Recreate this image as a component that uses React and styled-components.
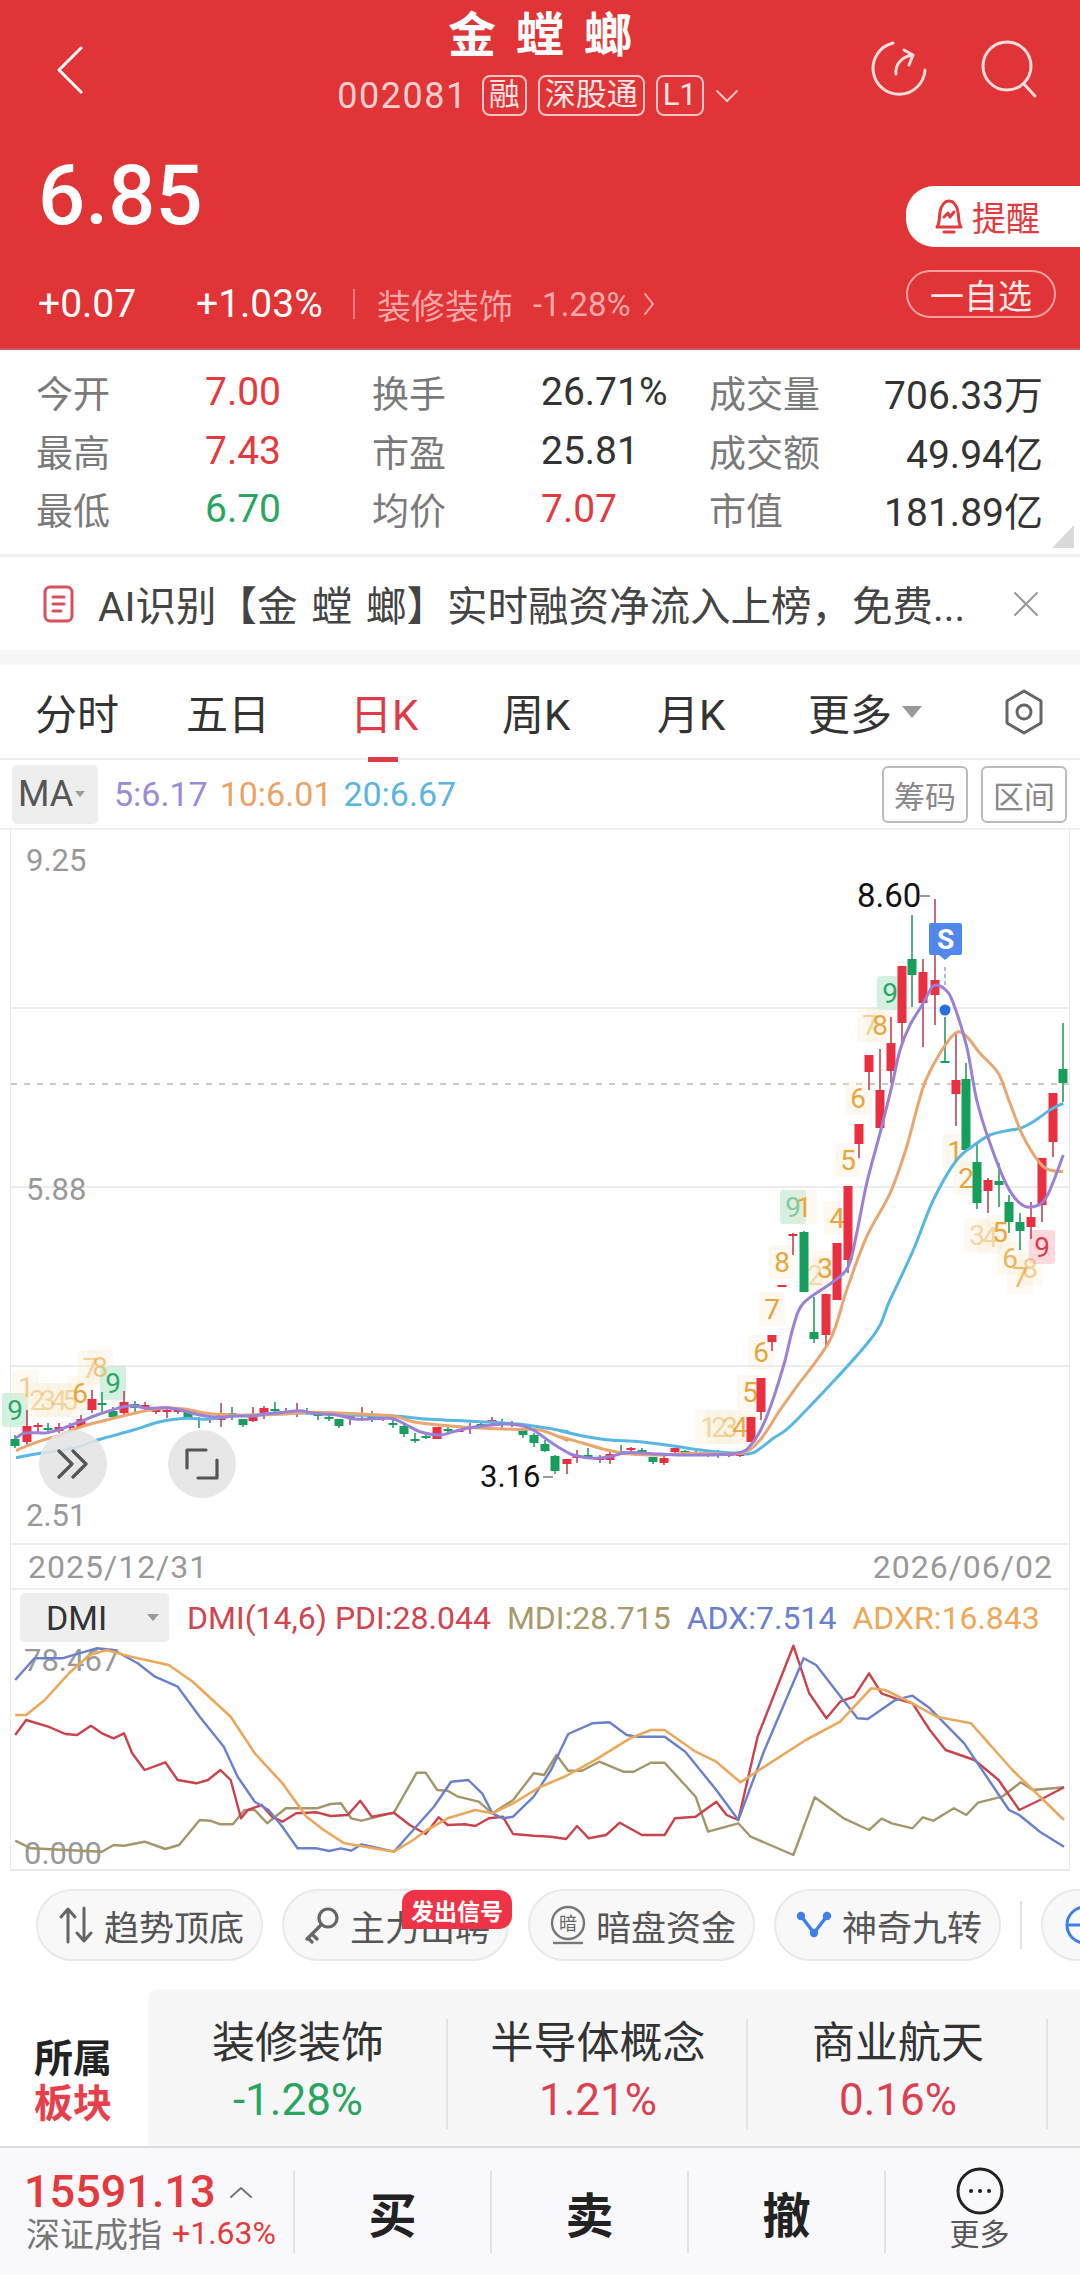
import React from 'react'
import styled, { createGlobalStyle } from 'styled-components'

const GlobalStyle = createGlobalStyle`
  html, body { margin: 0; padding: 0; background: #fff; }
  body { width: 1080px; font-family: Roboto, "Noto Sans CJK SC", sans-serif; color: #333; }
  * { box-sizing: border-box; }
`

const RED = '#e33a3f'
const GREEN = '#2aa561'

const Page = styled.div`
  width: 1080px;
  height: 2275px;
  overflow: hidden;
  background: #fff;
`

/* ---------- header ---------- */
const Header = styled.header`
  height: 350px;
  background: #e03436;
  border-bottom: 2px solid #c95a5a;
  color: #fff;
`
const TopBar = styled.div`
  height: 125px;
  display: grid;
  grid-template-columns: 1fr auto 1fr;
  align-items: start;
`
const BackBtn = styled.div`
  padding: 46px 0 0 56px;
`
const TitleBlock = styled.div`
  display: flex;
  flex-direction: column;
  align-items: center;
  padding-top: 3px;
`
const Title = styled.div`
  font-size: 48px;
  line-height: 66px;
  font-weight: 700;
  word-spacing: 8px;
`
const CodeRow = styled.div`
  display: flex;
  align-items: center;
  height: 41px;
  margin-top: 6px;
  margin-left: -4px;
  color: #f9cfcf;
`
const Code = styled.span`
  font-size: 36px;
  letter-spacing: 1.5px;
  margin-right: 14px;
`
const Badge = styled.span`
  height: 41px;
  padding: 0 5px;
  margin-right: 11px;
  border: 2px solid #f7c5c5;
  border-radius: 8px;
  font-size: 31px;
  line-height: 36px;
  color: #fde4e4;
`
const TopIcons = styled.div`
  display: flex;
  justify-content: flex-end;
  gap: 54px;
  padding: 40px 43px 0 0;
`
const QuoteRow = styled.div`
  display: flex;
  justify-content: space-between;
`
const QuoteLeft = styled.div`
  padding-left: 38px;
`
const Price = styled.div`
  font-size: 83px;
  line-height: 100px;
  height: 100px;
  margin-top: 21px;
  font-weight: 500;
`
const ChangeRow = styled.div`
  display: flex;
  align-items: center;
  height: 40px;
  margin-top: 38px;
`
const Change = styled.span`
  font-size: 39px;
  width: ${p => p.$w}px;
  font-weight: 400;
  white-space: nowrap;
`
const VRule = styled.span`
  width: 2px;
  height: 30px;
  background: #ef7d7d;
  margin: 0 22px 0 25px;
`
const Sector = styled.span`
  font-size: 34px;
  color: #f4a8a8;
  margin-right: 20px;
`
const SectorPct = styled.span`
  font-size: 33px;
  color: #f4a8a8;
  margin-right: 12px;
`
const PillCol = styled.div`
  display: flex;
  flex-direction: column;
  align-items: flex-start;
  width: 174px;
  padding-top: 61px;
  gap: 23px;
`
const RemindPill = styled.div`
  width: 174px;
  height: 61px;
  display: flex;
  align-items: center;
  gap: 7px;
  padding-left: 27px;
  background: #fff;
  border-radius: 28px 0 0 28px;
  color: ${RED};
  font-size: 34px;
`
const WatchPill = styled.div`
  width: 150px;
  height: 48px;
  display: flex;
  align-items: center;
  justify-content: center;
  border: 2px solid #f0a0a0;
  border-radius: 24px;
  color: #fde8e8;
  font-size: 34px;
`

/* ---------- stats ---------- */
const Stats = styled.div`
  position: relative;
  height: 204px;
  padding: 13px 37px 0 36px;
  display: grid;
  grid-template-columns: 169px 167px 169px 168px 120px 1fr;
  grid-auto-rows: 58.5px;
  align-items: center;
  font-size: 37px;
`
const StatLabel = styled.span`
  color: #7a7a7a;
`
const StatValue = styled.span`
  font-size: 39px;
  color: ${p => p.$c || '#333'};
  white-space: nowrap;
  ${p => p.$end && 'justify-self: end;'}
`
const CornerMark = styled.span`
  position: absolute;
  right: 6px;
  bottom: 6px;
  width: 22px;
  height: 23px;
  background: #dadada;
  clip-path: polygon(100% 0, 100% 100%, 0 100%);
`
const Rule = styled.div`
  height: ${p => p.$h || 3}px;
  background: ${p => p.$c || '#efefef'};
`
const Notice = styled.div`
  height: 93px;
  display: flex;
  align-items: center;
  padding-left: 43px;
  font-size: 40.5px;
  color: #444;
`
const NoticeText = styled.span`
  margin-left: 24px;
  width: 915px;
  white-space: nowrap;
  word-spacing: 4px;
`

/* ---------- tabs ---------- */
const Tabs = styled.nav`
  height: 95px;
  padding-left: 35px;
  display: grid;
  grid-template-columns: 151px 164px 152px 155px 151px 196px 40px;
  align-items: center;
  border-bottom: 2px solid #eee;
  font-size: 42px;
`
const Tab = styled.span`
  position: relative;
  display: flex;
  align-items: center;
  gap: 10px;
  height: 50px;
  color: ${p => (p.$active ? '#df3a47' : '#333')};
  ${p =>
    p.$active &&
    `&::after {
      content: "";
      position: absolute;
      left: 18px;
      bottom: -25px;
      width: 30px;
      height: 5px;
      background: #df3a47;
    }`}
`
const Caret = styled.span`
  width: 0;
  height: 0;
  border-left: ${p => p.$s}px solid transparent;
  border-right: ${p => p.$s}px solid transparent;
  border-top: ${p => p.$s * 1.2}px solid #999;
`

/* ---------- MA bar ---------- */
const MaBar = styled.div`
  height: 70px;
  display: flex;
  align-items: center;
  padding: 0 13px 0 12px;
  border-bottom: 2px solid #eee;
`
const MaBtn = styled.div`
  width: 86px;
  height: 59px;
  display: flex;
  align-items: center;
  gap: 2px;
  padding-left: 6px;
  background: #eee;
  border-radius: 5px;
  font-size: 36px;
  color: #555;
`
const MaValue = styled.span`
  margin-left: ${p => p.$ml}px;
  font-size: 34px;
  color: ${p => p.$c};
`
const SmallBtn = styled.span`
  width: 86px;
  height: 57px;
  display: flex;
  align-items: center;
  justify-content: center;
  margin-left: ${p => p.$ml || '0'};
  border: 2px solid #bbb;
  border-radius: 6px;
  font-size: 31px;
  color: #888;
`

/* ---------- charts ---------- */
const ChartFrame = styled.div`
  position: relative;
  margin: 0 10px;
  border-left: 1px solid #eaeaea;
  border-right: 1px solid #eaeaea;
`
const ChartSvg = styled.svg`
  display: block;
  width: 1058px;
  overflow: visible;
  font-family: Roboto, sans-serif;
`
const RoundBtn = styled.div`
  position: absolute;
  left: ${p => p.$x}px;
  top: 600px;
  width: 68px;
  height: 68px;
  display: flex;
  align-items: center;
  justify-content: center;
  border-radius: 50%;
  background: rgba(228, 228, 228, 0.88);
`
const DateRow = styled.div`
  height: 47px;
  display: flex;
  align-items: center;
  justify-content: space-between;
  padding: 0 16px 0 17px;
  border-top: 2px solid #eee;
  border-bottom: 2px solid #eee;
  font-size: 32px;
  letter-spacing: 1px;
  color: #999;
`
const DmiBar = styled.div`
  height: 55px;
  display: flex;
  align-items: center;
  padding-left: 9px;
  font-size: 32px;
`
const DmiBtn = styled.div`
  width: 149px;
  height: 49px;
  display: flex;
  align-items: center;
  justify-content: space-between;
  padding: 0 10px 0 26px;
  margin-right: 18px;
  background: #eee;
  border-radius: 5px;
  font-size: 34px;
  color: #333;
`
const Legend = styled.span`
  margin-right: ${p => p.$mr || 0}px;
  color: ${p => p.$c};
  white-space: nowrap;
`

/* ---------- chips ---------- */
const Chips = styled.div`
  height: 72px;
  margin: 18px 0 28px;
  padding-left: 36px;
  display: flex;
  align-items: center;
  overflow: hidden;
`
const Chip = styled.div`
  position: relative;
  flex: none;
  width: 227px;
  height: 72px;
  margin-right: 19px;
  display: flex;
  align-items: center;
  gap: 10px;
  padding-left: 20px;
  background: #f8f8f8;
  border: 2px solid #e9e9e9;
  border-radius: 36px;
  font-size: 35px;
  color: #555;
  white-space: nowrap;
`
const ChipBadge = styled.span`
  position: absolute;
  right: -5px;
  top: -1px;
  width: 110px;
  height: 39px;
  display: flex;
  align-items: center;
  justify-content: center;
  background: #ee3346;
  border-radius: 13px 13px 13px 0;
  font-size: 23px;
  font-weight: 700;
  color: #fff;
`
const ChipRule = styled.span`
  flex: none;
  width: 2px;
  height: 48px;
  margin-right: 19px;
  background: #e4e4e4;
`

/* ---------- sector row ---------- */
const Board = styled.section`
  height: 157px;
  display: flex;
`
const BoardTitle = styled.div`
  width: 148px;
  padding: 48px 0 0 34px;
  font-size: 39px;
  line-height: 45px;
  font-weight: 700;
  color: #222;
`
const BoardAccent = styled.div`
  color: #e8404a;
`
const BoardItems = styled.div`
  flex: 1;
  display: flex;
  align-items: center;
  background: #f7f7f8;
  border-top-left-radius: 10px;
`
const BoardItem = styled.div`
  position: relative;
  flex: none;
  width: 300px;
  display: flex;
  flex-direction: column;
  align-items: center;
  padding-top: 8px;
  &::after {
    content: "";
    position: absolute;
    right: 0;
    top: 12px;
    bottom: 0;
    width: 2px;
    background: #e3e3e3;
  }
`
const BoardName = styled.span`
  font-size: 43px;
  line-height: 56px;
  color: #333;
`
const BoardPct = styled.span`
  font-size: 44px;
  line-height: 58px;
  color: ${p => p.$c};
`

/* ---------- bottom bar ---------- */
const BottomBar = styled.footer`
  height: 129px;
  display: grid;
  grid-template-columns: 295px 197px 197px 197px 1fr;
  align-items: center;
  background: #f9f9fb;
  border-top: 2px solid #ddd;
`
const IndexCell = styled.div`
  padding-left: 24px;
  height: 82px;
  border-right: 2px solid #e2e2e2;
`
const IndexTop = styled.div`
  display: flex;
  align-items: center;
  gap: 13px;
  height: 42px;
  font-size: 45px;
  font-weight: 500;
  color: ${RED};
`
const IndexBottom = styled.div`
  display: flex;
  align-items: center;
  gap: 10px;
  height: 40px;
  padding-left: 2px;
  font-size: 34px;
  color: #777;
`
const IndexPct = styled.span`
  font-size: 32px;
  color: ${RED};
`
const TradeCell = styled.div`
  height: 82px;
  display: flex;
  align-items: center;
  justify-content: center;
  border-right: 2px solid #e2e2e2;
  font-size: 48px;
  font-weight: 700;
  color: #222;
`
const MoreCell = styled.div`
  display: flex;
  flex-direction: column;
  align-items: center;
  padding-right: 7px;
  margin-top: -2px;
  font-size: 30px;
  line-height: 40px;
  color: #555;
`

/* ---------- chart data ---------- */
const zoom3 = ([x, y]) => [700 + x / 3, 860 + y / 3]
const zoom7 = ([x, y]) => [560 + x / 3, 1240 + y / 3]
const zoom8 = ([x, y]) => [x / 3, 1340 + y / 3]
const zoom9 = ([x, y]) => [280 + x / 3, 1380 + y / 3]
const dmi = ([x, y]) => [x / 1.452, 1580 + y / 3]
const toPts = pts => pts.map(p => p.map(n => n.toFixed(1)).join(',')).join(' ')

// catmull-rom through the points, the moving averages are smooth curves
const smooth = pts => {
  let d = `M${pts[0][0].toFixed(1)} ${pts[0][1].toFixed(1)}`
  for (let i = 0; i < pts.length - 1; i++) {
    const p0 = pts[i - 1] || pts[i]
    const p1 = pts[i]
    const p2 = pts[i + 1]
    const p3 = pts[i + 2] || p2
    const c1 = [p1[0] + (p2[0] - p0[0]) / 6, p1[1] + (p2[1] - p0[1]) / 6]
    const c2 = [p2[0] - (p3[0] - p1[0]) / 6, p2[1] - (p3[1] - p1[1]) / 6]
    d += ` C${c1[0].toFixed(1)} ${c1[1].toFixed(1)} ${c2[0].toFixed(1)} ${c2[1].toFixed(1)} ${p2[0].toFixed(1)} ${p2[1].toFixed(1)}`
  }
  return d
}

const ma5 = [
  ...[[48,295],[70,280],[100,278],[140,278],[180,268],[240,245],[290,225],[330,212],[370,200],[400,197],[440,205],[500,203],[540,210],[600,225],[660,232],[700,228],[760,228],[800,222]].map(zoom8),
  ...[[0,98],[60,92],[100,100],[170,105],[230,118],[330,115],[380,135],[420,155],[480,165],[520,155],[580,142],[680,132],[750,145],[810,185],[850,210]].map(zoom9),
  ...[[40,645],[100,655],[150,650],[200,638],[300,642],[380,645],[530,640],[580,605],[620,530],[670,380],[700,260],[730,190]].map(zoom7),
  ...[[400,1265],[445,1220],[470,1120],[500,970],[540,820],[575,680],[600,570],[630,495],[670,430],[700,378],[735,388],[760,430],[800,560],[830,720],[870,850],[920,975],[960,1030],[1000,1040],[1040,1010],[1090,885]].map(zoom3),
]
const ma10 = [
  ...[[48,332],[100,310],[180,285],[240,262],[300,245],[380,225],[450,210],[500,203],[560,208],[620,220],[700,225],[760,225]].map(zoom8),
  ...[[0,103],[100,97],[240,102],[340,108],[400,125],[480,135],[560,142],[700,148],[780,150],[860,180]].map(zoom9),
  ...[[0,590],[70,610],[150,632],[220,643],[300,645],[400,640],[540,640],[600,600],[660,510],[710,440]].map(zoom7),
  ...[[390,1440],[440,1290],[500,1130],[570,1000],[620,860],[670,680],[720,580],[768,518],[800,530],[840,580],[895,640],[930,730],[970,830],[1020,910],[1050,930],[1090,935]].map(zoom3),
]
const ma20 = [
  ...[[48,353],[120,340],[220,325],[300,298],[400,270],[480,245],[560,235],[620,238],[700,228],[760,225]].map(zoom8),
  ...[[0,98],[100,100],[200,105],[340,108],[450,118],[600,125],[740,135],[860,155]].map(zoom9),
  ...[[0,572],[80,590],[150,600],[240,605],[340,618],[440,632],[540,640],[580,638],[640,595],[710,540]].map(zoom7),
  ...[[510,1440],[570,1320],[640,1170],[700,1020],[770,900],[830,850],[870,825],[920,812],[960,805],[1000,785],[1050,750],[1090,730]].map(zoom3),
]

// x, high, low, body top, body bottom, colour
const candles = [
  [15,1435,1448,1439,1446,'g'],[27,1410,1445,1426,1442,'r'],[38,1423,1432,1425,1427,'r'],[48,1423,1433,1428,1430,'g'],
  [59,1423,1433,1427,1431,'r'],[70,1423,1431,1426,1428,'r'],[81,1415,1427,1419,1427,'r'],[92,1390,1413,1399,1410,'r'],
  [102,1392,1412,1403,1405,'g'],[113,1407,1420,1411,1417,'g'],[124,1391,1415,1402,1413,'r'],[135,1401,1412,1404,1408,'g'],
  [145,1402,1411,1405,1407,'r'],[156,1408,1414,1410,1411,'r'],[167,1408,1418,1410,1411,'r'],[178,1408,1414,1410,1411,'r'],
  [188,1412,1418,1412,1418,'g'],[199,1417,1428,1418,1420,'g'],[210,1417,1423,1418,1419,'r'],[221,1403,1427,1414,1420,'r'],
  [232,1407,1420,1413,1414,'g'],[243,1419,1427,1419,1425,'g'],[253,1407,1422,1416,1421,'r'],[264,1406,1419,1408,1413,'r'],
  [275,1402,1412,1409,1410,'g'],[286,1408,1415,1411,1412,'r'],[297,1403,1417,1410,1411,'r'],[307,1408,1415,1411,1412,'g'],
  [318,1413,1420,1414,1415,'g'],[329,1413,1421,1417,1418,'g'],[339,1419,1428,1419,1426,'g'],[350,1414,1425,1416,1417,'r'],
  [362,1407,1421,1414,1415,'r'],[372,1411,1422,1416,1417,'g'],[383,1414,1421,1416,1417,'r'],[393,1417,1428,1423,1425,'g'],
  [404,1422,1437,1426,1434,'g'],[415,1433,1443,1439,1441,'g'],[426,1432,1439,1436,1438,'g'],[437,1427,1439,1427,1439,'r'],
  [448,1427,1433,1429,1430,'g'],[459,1429,1432,1430,1431,'r'],[470,1423,1434,1427,1429,'r'],[481,1422,1428,1424,1425,'g'],
  [492,1417,1425,1420,1421,'r'],[502,1419,1430,1423,1424,'g'],[512,1421,1427,1423,1424,'r'],[523,1429,1438,1429,1435,'g'],
  [534,1433,1447,1435,1443,'g'],[545,1440,1452,1444,1451,'g'],[555,1455,1474,1456,1471,'g'],[567,1459,1474,1459,1464,'r'],
  [577,1450,1463,1455,1458,'r'],[588,1448,1458,1455,1456,'g'],[600,1455,1463,1458,1460,'r'],[610,1449,1464,1454,1460,'r'],
  [621,1445,1453,1451,1452,'g'],[631,1447,1452,1448,1450,'r'],[642,1448,1453,1450,1452,'g'],[653,1457,1464,1457,1462,'g'],
  [664,1455,1465,1458,1463,'r'],[675,1448,1455,1448,1452,'r'],[685,1450,1456,1451,1453,'g'],[696,1450,1455,1452,1453,'g'],
  [708,1453,1457,1454,1455,'r'],[718,1450,1458,1453,1454,'g'],[729,1453,1457,1454,1455,'r'],[740,1452,1457,1454,1455,'r'],
  [751,1417,1442,1417,1442,'r'],[761,1378,1420,1378,1412,'r'],[772,1335,1351,1335,1342,'r'],[782,1285,1287,1285,1287,'r'],
  [793,1233,1255,1234,1235,'r'],[804,1231,1292,1232,1292,'g'],[814,1297,1343,1332,1339,'g'],[826,1294,1345,1294,1335,'r'],
  [837,1243,1300,1243,1300,'r'],[848,1186,1273,1186,1260,'r'],[859,1124,1158,1124,1144,'r'],[869,1055,1090,1055,1072,'r'],
  [880,1049,1128,1090,1128,'r'],[891,1017,1083,1043,1071,'r'],[902,966,1043,966,1023,'r'],[912,915,1007,959,975,'g'],
  [923,959,1047,972,1003,'r'],[935,899,1025,980,995,'r'],[945,1017,1062,1061,1062,'g'],[956,1033,1126,1080,1094,'r'],
  [966,1063,1152,1079,1150,'g'],[977,1143,1209,1162,1203,'g'],[988,1178,1213,1180,1191,'r'],[999,1163,1207,1181,1185,'g'],
  [1009,1195,1233,1202,1222,'g'],[1020,1213,1250,1222,1231,'g'],[1031,1202,1239,1217,1227,'r'],[1042,1158,1222,1158,1205,'r'],
  [1053,1093,1157,1093,1142,'r'],[1063,1023,1102,1069,1083,'g'],
]

// x, y, digit, kind, opacity
const tdMarks = [
  [15,1410,'9','g',1],[26,1387,'1','o',0.5],[37,1400,'2','o',0.4],[48,1400,'3','o',0.4],[59,1400,'4','o',0.4],[70,1400,'5','o',0.4],
  [80,1393,'6','o',1],[90,1368,'7','o',0.45],[100,1367,'8','o',0.6],[113,1383,'9','g',1],
  [708,1427,'1','o',0.4],[719,1427,'2','o',0.4],[730,1427,'3','o',0.5],[740,1427,'4','o',0.9],[750,1392,'5','o',1],[761,1352,'6','o',1],
  [772,1309,'7','o',1],[782,1262,'8','o',1],[793,1207,'9','g',0.5],[804,1207,'1','o',1],[815,1275,'2','o',0.35],[825,1268,'3','o',1],
  [837,1218,'4','o',1],[848,1160,'5','o',1],[858,1098,'6','o',1],[870,1025,'7','o',0.45],[880,1025,'8','o',1],[890,993,'9','g',1],
  [955,1151,'1','o',1],[966,1178,'2','o',1],[977,1235,'3','o',0.4],[990,1237,'4','o',0.4],[1000,1232,'5','o',1],[1010,1258,'6','o',0.8],
  [1020,1277,'7','o',0.7],[1030,1268,'8','o',0.5],[1042,1247,'9','r',1],
]
const tdColor = { o: '#e8a53c', g: '#2aa868', r: '#de3a4c' }
const tdBack = { o: '#f8ead2', g: '#cfeedd', r: '#fbd5da' }

const pdi = [[22,465],[38,420],[70,440],[95,462],[112,465],[132,437],[148,460],[165,475],[180,460],[192,520],[210,570],[240,547],[258,600],[285,610],[302,600],[320,570],[335,600],[350,715],[360,690],[380,675],[395,710],[410,725],[430,700],[460,697],[480,708],[505,705],[523,662],[540,710],[572,698],[595,735],[618,762],[637,712],[650,735],[675,733],[690,738],[710,715],[730,710],[745,762],[775,767],[800,770],[822,777],[838,738],[855,775],[880,765],[900,728],[932,765],[965,765],[980,715],[1010,710],[1040,665],[1055,705],[1072,720],[1100,470],[1152,197],[1175,340],[1200,415],[1220,365],[1240,350],[1262,280],[1280,340],[1300,355],[1325,370],[1350,450],[1373,510],[1415,540],[1450,600],[1480,690],[1510,660],[1545,622]]
const adx = [[22,300],[50,235],[90,235],[140,205],[165,210],[200,250],[225,290],[258,320],[290,410],[325,500],[345,590],[370,665],[390,690],[410,740],[432,805],[460,805],[478,813],[495,805],[510,812],[525,793],[572,815],[600,750],[630,680],[655,605],[680,600],[700,640],[715,700],[730,715],[745,710],[775,650],[800,570],[825,462],[860,430],[885,427],[910,465],[925,470],[965,470],[995,515],[1040,630],[1072,720],[1110,510],[1167,235],[1185,255],[1245,415],[1260,417],[1300,360],[1325,347],[1350,385],[1400,490],[1465,690],[1480,705],[1510,755],[1545,800]]
const adxr = [[22,405],[38,405],[65,360],[100,280],[130,225],[155,210],[190,230],[245,255],[280,305],[335,410],[370,520],[410,610],[445,710],[470,750],[500,790],[530,800],[572,815],[600,780],[620,750],[650,715],[690,690],[715,700],[745,670],[785,620],[820,590],[860,545],[915,475],[945,450],[965,450],[1010,515],[1040,545],[1075,607],[1110,560],[1170,480],[1220,425],[1265,325],[1285,330],[1320,365],[1360,410],[1410,430],[1470,570],[1500,630],[1545,720]]
const mdi = [[22,782],[45,805],[148,815],[165,795],[180,797],[210,785],[240,807],[260,795],[290,720],[305,722],[320,733],[338,733],[355,690],[370,690],[388,730],[415,685],[440,685],[460,685],[480,672],[495,670],[510,715],[525,722],[572,698],[605,578],[618,578],[635,630],[650,632],[665,650],[695,665],[715,700],[745,660],[775,580],[790,585],[808,525],[825,572],[845,572],[870,545],[905,575],[920,575],[945,548],[965,548],[1010,650],[1028,755],[1072,730],[1090,770],[1152,825],[1183,652],[1225,715],[1262,750],[1280,716],[1295,730],[1325,745],[1340,712],[1355,722],[1385,685],[1403,705],[1420,668],[1455,650],[1482,607],[1500,630],[1545,622]]

const Candle = ({ x, hi, lo, top, bot, c }) => {
  const body = c === 'r' ? '#e92f40' : '#169f5c'
  const wick = c === 'r' ? '#b4485a' : '#2a9a62'
  return (
    <g>
      <line x1={x} x2={x} y1={hi} y2={lo} stroke={wick} strokeWidth="1.6" />
      <rect x={x - 4.5} y={top} width="9" height={Math.max(bot - top, 2)} fill={body} />
    </g>
  )
}

const KlineChart = () => (
  <ChartSvg viewBox="11 830 1058 713" height="713">
    {[1008, 1187, 1366].map(y => (
      <line key={y} x1="11" x2="1069" y1={y} y2={y} stroke="#ececec" strokeWidth="2" />
    ))}
    <line x1="11" x2="1069" y1="1084" y2="1084" stroke="#b9b9b9" strokeWidth="1.5" strokeDasharray="6 7" />
    <text x="26" y="871" fontSize="31" fill="#999">9.25</text>
    <text x="26" y="1200" fontSize="31" fill="#999">5.88</text>
    <text x="26" y="1526" fontSize="31" fill="#999">2.51</text>
    {tdMarks.map(([x, y, d, k], i) => (
      <rect key={i} x={x - 13} y={y - 17} width="26" height="34" rx="3" fill={tdBack[k]} opacity={k === 'o' ? 0.3 : 0.9} />
    ))}
    {tdMarks.map(([x, y, d, k, o], i) => (
      <text key={i} x={x} y={y + 10} fontSize="28" textAnchor="middle" fill={tdColor[k]} opacity={o}>{d}</text>
    ))}
    {candles.map(([x, hi, lo, top, bot, c]) => (
      <Candle key={x} x={x} hi={hi} lo={lo} top={top} bot={bot} c={c} />
    ))}
    <path d={smooth(ma20)} fill="none" stroke="#58b6e2" strokeWidth="3" />
    <path d={smooth(ma10)} fill="none" stroke="#e8a670" strokeWidth="3" />
    <path d={smooth(ma5)} fill="none" stroke="#9a80d6" strokeWidth="3" />
    <text x="857" y="907" fontSize="33" fill="#111">8.60</text>
    <line x1="920" x2="930" y1="896" y2="896" stroke="#777" strokeWidth="1.5" />
    <text x="480" y="1487" fontSize="31" fill="#111">3.16</text>
    <line x1="543" x2="553" y1="1477" y2="1477" stroke="#777" strokeWidth="1.5" />
    <path d="M929 925 a2 2 0 0 1 2-2 h29 a2 2 0 0 1 2 2 v28 a2 2 0 0 1 -2 2 h-9 l-6 5 l-6-5 h-8 a2 2 0 0 1 -2-2 z" fill="#5288ee" />
    <text x="945.5" y="949" fontSize="28" fontWeight="700" textAnchor="middle" fill="#fff">S</text>
    <line x1="945" x2="945" y1="967" y2="985" stroke="#8aa7e0" strokeWidth="1.5" strokeDasharray="4 3" />
    <circle cx="945" cy="1010" r="5.5" fill="#2a6fe0" />
  </ChartSvg>
)

const DmiChart = () => (
  <ChartSvg viewBox="11 1645 1058 224" height="224">
    <text x="24" y="1671" fontSize="31" fill="#999">78.467</text>
    <text x="24" y="1864" fontSize="31" fill="#999">0.000</text>
    <polyline points={toPts(mdi.map(dmi))} fill="none" stroke="#a4966a" strokeWidth="2.4" strokeLinejoin="round" />
    <polyline points={toPts(pdi.map(dmi))} fill="none" stroke="#c9434e" strokeWidth="2.4" strokeLinejoin="round" />
    <polyline points={toPts(adx.map(dmi))} fill="none" stroke="#6b80cc" strokeWidth="2.4" strokeLinejoin="round" />
    <polyline points={toPts(adxr.map(dmi))} fill="none" stroke="#eaa85c" strokeWidth="2.6" strokeLinejoin="round" />
  </ChartSvg>
)

const Stroke = ({ w, h, sw = 3, c = '#fff', children }) => (
  <svg width={w} height={h} viewBox={`0 0 ${w} ${h}`} fill="none" stroke={c} strokeWidth={sw} strokeLinecap="round" strokeLinejoin="round">
    {children}
  </svg>
)

const statRows = [
  ['今开', '7.00', RED, '换手', '26.71%', null, '成交量', '706.33万'],
  ['最高', '7.43', RED, '市盈', '25.81', null, '成交额', '49.94亿'],
  ['最低', '6.70', GREEN, '均价', '7.07', RED, '市值', '181.89亿'],
]

const App = () => (
  <Page>
    <GlobalStyle />
    <Header>
      <TopBar>
        <BackBtn>
          <Stroke w={28} h={48}><path d="M25 2 L3 24 L25 46" /></Stroke>
        </BackBtn>
        <TitleBlock>
          <Title>金 螳 螂</Title>
          <CodeRow>
            <Code>002081</Code>
            <Badge>融</Badge>
            <Badge>深股通</Badge>
            <Badge>L1</Badge>
            <Stroke w={24} h={14} sw={2} c="#f7c5c5"><path d="M2 2 L12 12 L22 2" /></Stroke>
          </CodeRow>
        </TitleBlock>
        <TopIcons>
          <Stroke w={56} h={57} c="#fbdcdc">
            <path d="M22 3 A26 26 0 1 0 54 30" />
            <path d="M25 34 C24 25 30 17 41 15 M33 10 L42 15 L38 25" />
          </Stroke>
          <Stroke w={56} h={58} c="#fbdcdc">
            <circle cx="26" cy="26" r="24" />
            <path d="M43 44 L54 56" />
          </Stroke>
        </TopIcons>
      </TopBar>
      <QuoteRow>
        <QuoteLeft>
          <Price>6.85</Price>
          <ChangeRow>
            <Change $w={158}>+0.07</Change>
            <Change $w={132}>+1.03%</Change>
            <VRule />
            <Sector>装修装饰</Sector>
            <SectorPct>-1.28%</SectorPct>
            <Stroke w={12} h={24} sw={2} c="#f4a8a8"><path d="M2 2 L10 12 L2 22" /></Stroke>
          </ChangeRow>
        </QuoteLeft>
        <PillCol>
          <RemindPill>
            <Stroke w={32} h={40} sw={3} c={RED}>
              <path d="M4 30 C7 26 6 20 7 15 C8 8 12 4 16 4 C20 4 24 8 25 15 C26 20 25 26 28 30 Z" />
              <path d="M11 20 L15 16 L17 20 L21 15" />
              <path d="M11 35 H21" />
            </Stroke>
            提醒
          </RemindPill>
          <WatchPill>一自选</WatchPill>
        </PillCol>
      </QuoteRow>
    </Header>

    <Stats>
      {statRows.map(r => (
        <React.Fragment key={r[0]}>
          <StatLabel>{r[0]}</StatLabel>
          <StatValue $c={r[2]}>{r[1]}</StatValue>
          <StatLabel>{r[3]}</StatLabel>
          <StatValue $c={r[5]}>{r[4]}</StatValue>
          <StatLabel>{r[6]}</StatLabel>
          <StatValue $end>{r[7]}</StatValue>
        </React.Fragment>
      ))}
      <CornerMark />
    </Stats>
    <Rule />

    <Notice>
      <Stroke w={31} h={38} sw={3} c="#d8505c">
        <rect x="2" y="2" width="27" height="34" rx="5" />
        <path d="M10 12 H21 M10 19 H21 M10 26 H18" />
      </Stroke>
      <NoticeText>{'AI识别【金 螳 螂】实时融资净流入上榜\uFF0C免费...'}</NoticeText>
      <Stroke w={26} h={26} sw={2} c="#999"><path d="M2 2 L24 24 M24 2 L2 24" /></Stroke>
    </Notice>
    <Rule $h={15} $c="#f7f7f7" />

    <Tabs>
      <Tab>分时</Tab>
      <Tab>五日</Tab>
      <Tab $active>日K</Tab>
      <Tab>周K</Tab>
      <Tab>月K</Tab>
      <Tab>更多<Caret $s={10} /></Tab>
      <Stroke w={40} h={46} sw={3} c="#666">
        <path d="M20 2 L37 12 V34 L20 44 L3 34 V12 Z" />
        <circle cx="20" cy="23" r="7" />
      </Stroke>
    </Tabs>

    <MaBar>
      <MaBtn>MA<Caret $s={5} /></MaBtn>
      <MaValue $ml={16} $c="#9a8ad8">5:6.17</MaValue>
      <MaValue $ml={12} $c="#e8a468">10:6.01</MaValue>
      <MaValue $ml={11} $c="#5bb5e0">20:6.67</MaValue>
      <SmallBtn $ml="auto">筹码</SmallBtn>
      <SmallBtn $ml="13px">区间</SmallBtn>
    </MaBar>

    <ChartFrame>
      <KlineChart />
      <RoundBtn $x={28}>
        <Stroke w={34} h={30} sw={3.2} c="#555"><path d="M3 2 L16 15 L3 28 M17 2 L30 15 L17 28" /></Stroke>
      </RoundBtn>
      <RoundBtn $x={157}>
        <Stroke w={34} h={32} sw={3.2} c="#555"><path d="M2 20 V2 H21 M32 12 V30 H13" /></Stroke>
      </RoundBtn>
    </ChartFrame>
    <ChartFrame>
      <DateRow>
        <span>2025/12/31</span>
        <span>2026/06/02</span>
      </DateRow>
      <DmiBar>
        <DmiBtn>DMI<Caret $s={6} /></DmiBtn>
        <Legend $c="#d0454f" $mr={16}>DMI(14,6) PDI:28.044</Legend>
        <Legend $c="#a89a6a" $mr={16}>MDI:28.715</Legend>
        <Legend $c="#6a80cc" $mr={16}>ADX:7.514</Legend>
        <Legend $c="#eda858">ADXR:16.843</Legend>
      </DmiBar>
      <DmiChart />
      <Rule $h={2} $c="#e8e8e8" />
    </ChartFrame>

    <Chips>
      <Chip>
        <Stroke w={36} h={38} sw={3} c="#666"><path d="M10 36 V4 M3 11 L10 3 L17 11 M26 2 V34 M19 27 L26 35 L33 27" /></Stroke>
        趋势顶底
      </Chip>
      <Chip>
        <Stroke w={36} h={38} sw={3.2} c="#666">
          <circle cx="24" cy="12" r="9" />
          <path d="M17 19 L3 33 M8 28 L13 33 M4 32 L8 36" />
        </Stroke>
        主力出聘
        <ChipBadge>发出信号</ChipBadge>
      </Chip>
      <Chip>
        <svg width="36" height="40" viewBox="0 0 36 40" fill="none" stroke="#777" strokeWidth="2.4">
          <circle cx="18" cy="18" r="16" />
          <path d="M3 38 H33" />
          <text x="18" y="25" fontSize="18" textAnchor="middle" fill="#666" stroke="none">暗</text>
        </svg>
        暗盘资金
      </Chip>
      <Chip>
        <svg width="36" height="30" viewBox="0 0 36 30" fill="#3f7fe8" stroke="#3f7fe8" strokeWidth="3.4">
          <path d="M5 6 L18 23 L31 6" fill="none" />
          <circle cx="5" cy="6" r="2.5" />
          <circle cx="18" cy="23" r="2.5" />
          <circle cx="31" cy="6" r="2.5" />
        </svg>
        神奇九转
      </Chip>
      <ChipRule />
      <Chip>
        <svg width="44" height="42" viewBox="0 0 44 42" fill="none" stroke="#3f7fe8" strokeWidth="3">
          <circle cx="22" cy="21" r="18" />
          <path d="M4 21 H40" />
        </svg>
      </Chip>
    </Chips>

    <Board>
      <BoardTitle>
        所属
        <BoardAccent>板块</BoardAccent>
      </BoardTitle>
      <BoardItems>
        <BoardItem>
          <BoardName>装修装饰</BoardName>
          <BoardPct $c={GREEN}>-1.28%</BoardPct>
        </BoardItem>
        <BoardItem>
          <BoardName>半导体概念</BoardName>
          <BoardPct $c="#dc4150">1.21%</BoardPct>
        </BoardItem>
        <BoardItem>
          <BoardName>商业航天</BoardName>
          <BoardPct $c="#dc4150">0.16%</BoardPct>
        </BoardItem>
      </BoardItems>
    </Board>

    <BottomBar>
      <IndexCell>
        <IndexTop>
          15591.13
          <Stroke w={24} h={12} sw={2} c="#777"><path d="M2 11 L12 2 L22 11" /></Stroke>
        </IndexTop>
        <IndexBottom>
          深证成指
          <IndexPct>+1.63%</IndexPct>
        </IndexBottom>
      </IndexCell>
      <TradeCell>买</TradeCell>
      <TradeCell>卖</TradeCell>
      <TradeCell>撤</TradeCell>
      <MoreCell>
        <svg width="48" height="48" viewBox="0 0 48 48" fill="none" stroke="#222" strokeWidth="3">
          <circle cx="24" cy="24" r="22" />
          <path d="M15 24 H15.1 M24 24 H24.1 M33 24 H33.1" strokeWidth="4" strokeLinecap="round" />
        </svg>
        更多
      </MoreCell>
    </BottomBar>
  </Page>
)

export default App
